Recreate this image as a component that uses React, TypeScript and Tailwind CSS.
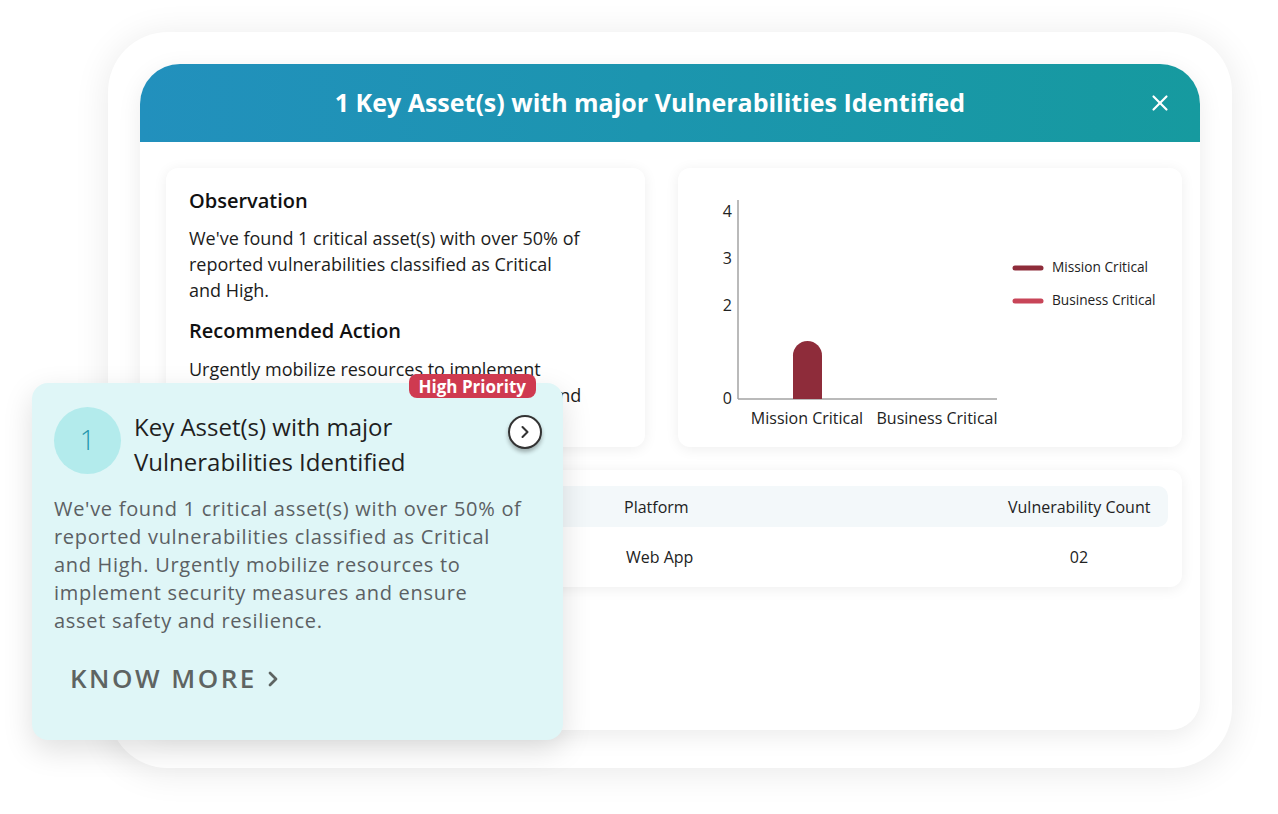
import React from "react";
import { X, ChevronRight } from "lucide-react";

const rows = [{ asset: "Customer Portal", platform: "Web App", count: "02" }];

const BarChart: React.FC = () => {
    return (
        <svg width="504" height="279" viewBox="0 0 504 279" className="block" style={{ fontFamily: "'Open Sans', sans-serif" }}>
            {/* axes */}
            <line x1="60" y1="32" x2="60" y2="231" stroke="#a3a3a3" strokeWidth="1.5" />
            <line x1="60" y1="231" x2="319" y2="231" stroke="#a3a3a3" strokeWidth="1.5" />
            {/* y ticks */}
            <text x="54" y="45" textAnchor="end" dominantBaseline="middle" fontSize="16" fill="#222">4</text>
            <text x="54" y="92" textAnchor="end" dominantBaseline="middle" fontSize="16" fill="#222">3</text>
            <text x="54" y="139" textAnchor="end" dominantBaseline="middle" fontSize="16" fill="#222">2</text>
            <text x="54" y="232" textAnchor="end" dominantBaseline="middle" fontSize="16" fill="#222">0</text>
            {/* bar */}
            <path d="M115 231 V187.5 A14.5 14.5 0 0 1 144 187.5 V231 Z" fill="#8e2c3a" />
            {/* x labels */}
            <text x="129" y="252" textAnchor="middle" dominantBaseline="middle" fontSize="16" fill="#222">Mission Critical</text>
            <text x="259" y="252" textAnchor="middle" dominantBaseline="middle" fontSize="16" fill="#222">Business Critical</text>
            {/* legend */}
            <line x1="337" y1="100" x2="363" y2="100" stroke="#8e2c3a" strokeWidth="5" strokeLinecap="round" />
            <text x="374" y="100" dominantBaseline="middle" fontSize="13.7" fill="#222">Mission Critical</text>
            <line x1="337" y1="133" x2="363" y2="133" stroke="#c84558" strokeWidth="5" strokeLinecap="round" />
            <text x="374" y="133" dominantBaseline="middle" fontSize="13.7" fill="#222">Business Critical</text>
        </svg>
    );
};

const App: React.FC = () => {
    return (
        <div className="relative w-[1278px] h-[814px] bg-white overflow-hidden font-['Open_Sans',sans-serif]">
            {/* Outer frame */}
            <div className="ml-[108px] mt-[32px] w-[1124px] h-[736px] rounded-[60px] bg-white shadow-[0_4px_36px_rgba(0,0,0,0.09)] pt-[32px] px-[32px]">
                {/* Panel */}
                <div className="w-[1060px] h-[666px] bg-white rounded-t-[40px] rounded-b-[30px] shadow-[0_6px_24px_rgba(0,0,0,0.08)] overflow-hidden flex flex-col">
                    {/* Header */}
                    <div className="relative h-[78px] shrink-0 flex items-center justify-center pr-[40px] bg-gradient-to-r from-[#2290bd] to-[#169a9f]">
                        <h2 className="text-[25px] font-bold text-white">
                            1 Key Asset(s) with major Vulnerabilities Identified
                        </h2>
                        <button className="absolute right-[27px] top-[26px] text-white">
                            <X className="w-[26px] h-[26px]" strokeWidth={2} />
                        </button>
                    </div>

                    {/* Content */}
                    <div className="flex-1 pl-[26px] pr-[18px] pt-[26px]">
                        <div className="flex gap-[33px]">
                            <div className="w-[479px] h-[279px] bg-white rounded-[12px] shadow-[0_2px_14px_rgba(0,0,0,0.07)] px-[23px] pt-[20px] overflow-hidden">
                                <h3 className="text-[20px] font-semibold text-[#111] leading-[26px]">Observation</h3>
                                <p className="mt-[11px] text-[18px] leading-[26px] text-[#1c1c1c] whitespace-nowrap">
                                    We've found 1 critical asset(s) with over 50% of
                                    <br />
                                    reported vulnerabilities classified as Critical
                                    <br />
                                    and High.
                                </p>
                                <h3 className="mt-[15px] text-[20px] font-semibold text-[#111] leading-[26px]">Recommended Action</h3>
                                <p className="mt-[12px] text-[18px] leading-[26px] text-[#1c1c1c] whitespace-nowrap">
                                    Urgently mobilize resources to implement
                                    <br />
                                    security measures and ensure asset safety and
                                    <br />
                                    resilience.
                                </p>
                            </div>
                            <div className="w-[504px] h-[279px] bg-white rounded-[12px] shadow-[0_2px_14px_rgba(0,0,0,0.07)]">
                                <BarChart />
                            </div>
                        </div>

                        {/* Table */}
                        <div className="mt-[23px] w-[1016px] h-[117px] bg-white rounded-[12px] shadow-[0_2px_14px_rgba(0,0,0,0.07)] px-[14px] pt-[16px]">
                            <div className="h-[41px] bg-[#f3f8fa] rounded-[10px] flex items-center pl-[20px] pr-[18px] text-[16px] text-[#222]">
                                <div className="w-[424px]">Asset Name</div>
                                <div className="flex-1">Platform</div>
                                <div className="w-[142px] text-center whitespace-nowrap">Vulnerability Count</div>
                            </div>
                            {rows.map((row) => (
                                <div key={row.asset} className="h-[60px] flex items-center pl-[20px] pr-[18px] text-[16px] text-[#222]">
                                    <div className="w-[426px]">{row.asset}</div>
                                    <div className="flex-1">{row.platform}</div>
                                    <div className="w-[142px] text-center">{row.count}</div>
                                </div>
                            ))}
                        </div>
                    </div>
                </div>
            </div>

            {/* Floating insight card */}
            <div className="absolute left-[32px] top-[383px] w-[531px] h-[357px] rounded-[16px] bg-[#dff6f7] shadow-[0_10px_30px_rgba(0,0,0,0.13)] pl-[22px] pr-[21px] pt-[24px]">
                <span className="absolute -top-[9px] right-[27px] h-[24px] px-[10px] flex items-center rounded-[8px] bg-[#cf3a50] text-white text-[17px] font-bold leading-none">
                    High Priority
                </span>
                <div className="flex items-start">
                    <div className="w-[67px] h-[67px] rounded-full bg-[#b3ebec] flex items-center justify-center shrink-0 text-[27px] font-light text-[#2496ab]">
                        1
                    </div>
                    <h3 className="ml-[13px] mt-[2px] flex-1 text-[24px] font-medium leading-[35px] text-[#1f1f1f]">
                        Key Asset(s) with major
                        <br />
                        Vulnerabilities Identified
                    </h3>
                    <button className="mt-[8px] w-[34px] h-[34px] rounded-full bg-white border-2 border-[#333] flex items-center justify-center shadow-[0_3px_4px_rgba(0,0,0,0.3)]">
                        <ChevronRight className="w-[20px] h-[20px] text-[#333]" strokeWidth={2.5} />
                    </button>
                </div>
                <p className="mt-[16px] whitespace-nowrap text-[20px] leading-[28px] tracking-[0.7px] text-[#5b6063]">
                    We've found 1 critical asset(s) with over 50% of
                    <br />
                    reported vulnerabilities classified as Critical
                    <br />
                    and High. Urgently mobilize resources to
                    <br />
                    implement security measures and ensure
                    <br />
                    asset safety and resilience.
                </p>
                <button className="mt-[24px] ml-[16px] flex items-center text-[26px] font-semibold tracking-[2.5px] text-[#5e6462]">
                    KNOW MORE
                    <ChevronRight className="ml-[4px] w-[24px] h-[24px]" strokeWidth={2.75} />
                </button>
            </div>
        </div>
    );
};

export default App;
